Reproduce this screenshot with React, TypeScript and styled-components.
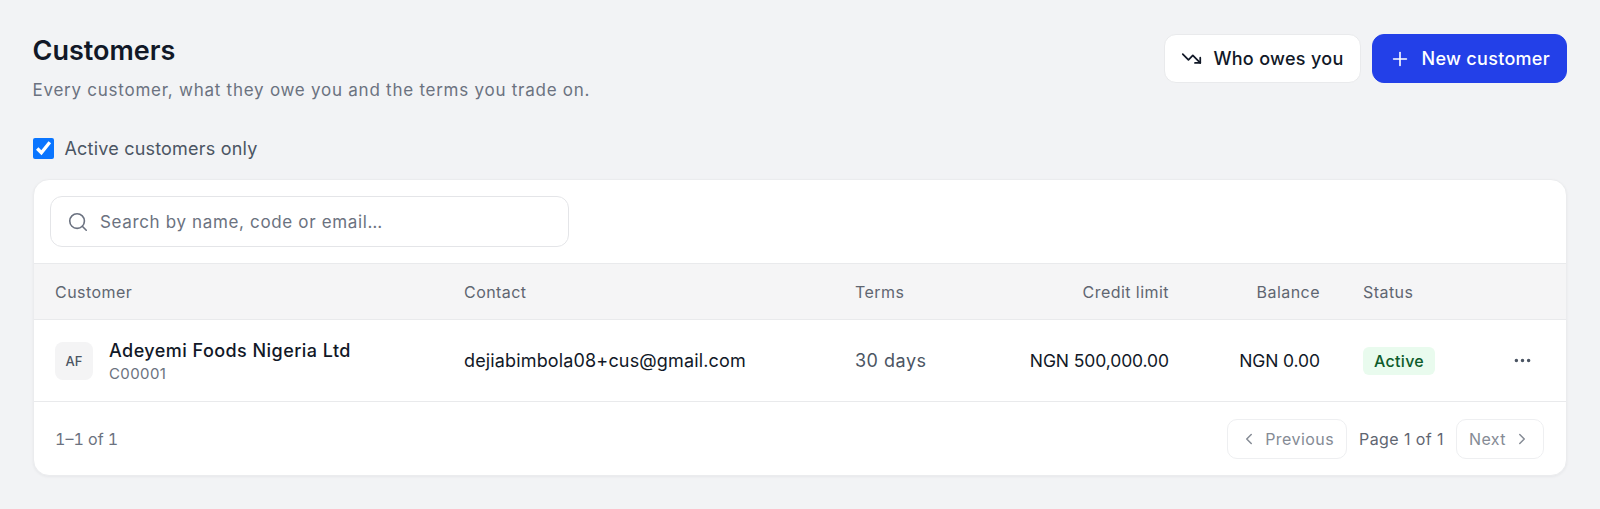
import styled, { createGlobalStyle } from 'styled-components';
import { ChevronLeft, ChevronRight, Ellipsis, Plus, Search, TrendingDown } from 'lucide-react';

const GlobalStyle = createGlobalStyle`
  * {
    box-sizing: border-box;
  }
  body {
    margin: 0;
    background: #f2f3f5;
    font-family: Inter, "Noto Sans", sans-serif;
    color: #111827;
  }
`;

const Page = styled.div`
  padding: 33px 33px 33px 32.5px;
`;

const Header = styled.header`
  display: flex;
  justify-content: space-between;
  align-items: flex-start;
`;

const Title = styled.h1`
  margin: 0;
  font-size: 27px;
  line-height: 36px;
  font-weight: 600;
  color: #111827;
`;

const Subtitle = styled.p`
  margin: 8px 0 0;
  font-size: 17px;
  line-height: 26px;
  letter-spacing: 0.75px;
  color: #6b7280;
`;

const Actions = styled.div`
  display: flex;
  gap: 11px;
  margin-top: 1px;
`;

const Button = styled.button<{ $primary?: boolean }>`
  display: flex;
  align-items: center;
  gap: 11px;
  height: 49px;
  padding: 0 16px;
  border-radius: 12px;
  border: 1px solid ${p => (p.$primary ? '#2340e8' : '#e9eaec')};
  background: ${p => (p.$primary ? '#2340e8' : '#ffffff')};
  color: ${p => (p.$primary ? '#ffffff' : '#111827')};
  font-family: inherit;
  font-size: 18px;
  font-weight: 500;
  letter-spacing: 0.3px;
`;

const ActiveFilter = styled.label`
  display: flex;
  align-items: center;
  gap: 11px;
  margin-top: 33px;
  height: 24px;
  font-size: 18px;
  letter-spacing: 0.2px;
  color: #4b5563;
`;

const Checkbox = styled.input`
  width: 21px;
  height: 21px;
  margin: 0;
  accent-color: #0a75ff;
`;

const Card = styled.section`
  margin-top: 19px;
  background: #ffffff;
  border: 1px solid #ebecee;
  border-radius: 16px;
  box-shadow: 0 1px 3px rgba(17, 24, 39, 0.05);
  overflow: hidden;
`;

const SearchBar = styled.div`
  padding: 16px 16px 16px 16.5px;
`;

const SearchField = styled.div`
  display: flex;
  align-items: center;
  gap: 11px;
  width: 519px;
  height: 51px;
  padding: 0 16px;
  border: 1px solid #e4e5e8;
  border-radius: 12px;
  color: #6b7280;
`;

const SearchInput = styled.input`
  flex: 1;
  border: 0;
  outline: 0;
  padding: 0;
  background: transparent;
  font-family: inherit;
  font-size: 17px;
  letter-spacing: 0.65px;
  &::placeholder {
    color: #6b7280;
    opacity: 1;
  }
`;

const Row = styled.div<{ $head?: boolean }>`
  display: grid;
  grid-template-columns: 409px 391px 120px 194px 151px 1fr 30px;
  align-items: center;
  padding: 0 29px 0 21.5px;
  height: ${p => (p.$head ? '56px' : '82px')};
  border-top: 1px solid #e9eaec;
  background: ${p => (p.$head ? '#f5f5f6' : '#ffffff')};
`;

const HeadCell = styled.div<{ $right?: boolean; $status?: boolean }>`
  font-size: 16px;
  font-weight: 400;
  letter-spacing: 0.45px;
  color: #5f6671;
  text-align: ${p => (p.$right ? 'right' : 'left')};
  padding-left: ${p => (p.$status ? '43px' : '0')};
`;

const Cell = styled.div<{ $right?: boolean; $muted?: boolean; $status?: boolean }>`
  font-size: 18px;
  letter-spacing: 0.15px;
  color: ${p => (p.$muted ? '#4b5563' : '#111827')};
  text-align: ${p => (p.$right ? 'right' : 'left')};
  padding-left: ${p => (p.$status ? '43px' : '0')};
`;

const Amount = styled(Cell)`
  font-size: 17.5px;
  letter-spacing: -0.1px;
  text-align: right;
`;

const Terms = styled(Cell)`
  letter-spacing: 0.5px;
`;

const CustomerCell = styled.div`
  display: flex;
  align-items: center;
  gap: 16px;
`;

const Avatar = styled.div`
  display: flex;
  align-items: center;
  justify-content: center;
  width: 38px;
  height: 38px;
  border-radius: 8px;
  background: #f4f4f5;
  font-size: 13px;
  font-weight: 500;
  color: #4b5563;
`;

const CustomerName = styled.div`
  font-size: 18px;
  line-height: 25px;
  font-weight: 500;
  letter-spacing: 0.45px;
  color: #111827;
`;

const CustomerCode = styled.div`
  font-size: 15px;
  line-height: 21px;
  letter-spacing: 0.4px;
  color: #6b7280;
`;

const StatusBadge = styled.span`
  display: inline-block;
  padding: 0 11px;
  height: 28px;
  line-height: 28px;
  border-radius: 6px;
  background: #e9fbee;
  color: #0d5c2b;
  font-size: 16px;
  font-weight: 500;
  letter-spacing: 0.3px;
`;

const MoreButton = styled.div`
  display: flex;
  justify-content: center;
  color: #4b5563;
`;

const Footer = styled.footer`
  display: flex;
  align-items: center;
  justify-content: space-between;
  height: 74px;
  padding: 0 22px 0 21.5px;
  border-top: 1px solid #e9eaec;
`;

const RangeLabel = styled.span`
  font-size: 16px;
  font-variant-numeric: tabular-nums;
  color: #6b7280;
`;

const Pager = styled.div`
  display: flex;
  align-items: center;
  gap: 12px;
`;

const PageButton = styled.button`
  display: flex;
  align-items: center;
  gap: 7px;
  height: 40px;
  padding: 0 12px;
  border: 1px solid #eeeff1;
  border-radius: 10px;
  background: #ffffff;
  color: #858b95;
  font-family: inherit;
  font-size: 16px;
  font-weight: 400;
  letter-spacing: 0.45px;
`;

const PageLabel = styled.span`
  font-size: 16px;
  letter-spacing: 0.4px;
  color: #5f6671;
`;

export default function App() {
  return (
    <>
      <GlobalStyle />
      <Page>
        <Header>
          <div>
            <Title>Customers</Title>
            <Subtitle>Every customer, what they owe you and the terms you trade on.</Subtitle>
          </div>
          <Actions>
            <Button>
              <TrendingDown size={21} strokeWidth={2} />
              Who owes you
            </Button>
            <Button $primary>
              <Plus size={22} strokeWidth={1.75} />
              New customer
            </Button>
          </Actions>
        </Header>

        <ActiveFilter>
          <Checkbox type="checkbox" defaultChecked />
          Active customers only
        </ActiveFilter>

        <Card>
          <SearchBar>
            <SearchField>
              <Search size={22} strokeWidth={1.75} />
              <SearchInput placeholder="Search by name, code or email…" />
            </SearchField>
          </SearchBar>

          <Row $head>
            <HeadCell>Customer</HeadCell>
            <HeadCell>Contact</HeadCell>
            <HeadCell>Terms</HeadCell>
            <HeadCell $right>Credit limit</HeadCell>
            <HeadCell $right>Balance</HeadCell>
            <HeadCell $status>Status</HeadCell>
            <div />
          </Row>

          <Row>
            <CustomerCell>
              <Avatar>AF</Avatar>
              <div>
                <CustomerName>Adeyemi Foods Nigeria Ltd</CustomerName>
                <CustomerCode>C00001</CustomerCode>
              </div>
            </CustomerCell>
            <Cell>dejiabimbola08+cus@gmail.com</Cell>
            <Terms $muted>30 days</Terms>
            <Amount>NGN 500,000.00</Amount>
            <Amount>NGN 0.00</Amount>
            <Cell $status>
              <StatusBadge>Active</StatusBadge>
            </Cell>
            <MoreButton>
              <Ellipsis size={21} />
            </MoreButton>
          </Row>

          <Footer>
            <RangeLabel>1–1 of 1</RangeLabel>
            <Pager>
              <PageButton>
                <ChevronLeft size={18} />
                Previous
              </PageButton>
              <PageLabel>Page 1 of 1</PageLabel>
              <PageButton>
                Next
                <ChevronRight size={18} />
              </PageButton>
            </Pager>
          </Footer>
        </Card>
      </Page>
    </>
  );
}
